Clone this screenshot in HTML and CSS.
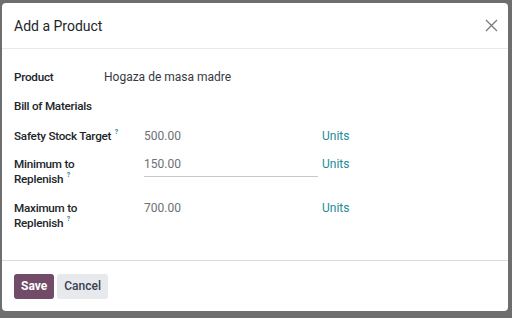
FILE: index.html
```html
<!DOCTYPE html>
<html>
<head>
    <title>Add a Product</title>
    <link rel="stylesheet" href="styles.css">
</head>
<body>
    <div class="backdrop">
        <div class="dialog">
            <div class="dialog-header">
                <h4 class="title">Add a Product</h4>
                <button class="close" aria-label="Close">
                    <svg width="13" height="13" viewBox="0 0 13 13"><path d="M1 1L12 12M12 1L1 12" stroke="#7a7a7a" stroke-width="1.3" fill="none"/></svg>
                </button>
            </div>
            <div class="dialog-body">
                <div class="row">
                    <div class="label">Product</div>
                    <div class="value product">Hogaza de masa madre</div>
                </div>
                <div class="row">
                    <div class="label nowrap">Bill of Materials</div>
                </div>
                <div class="row">
                    <div class="label wide">Safety Stock Target <sup>?</sup></div>
                    <div class="value num">500.00</div>
                    <div class="unit">Units</div>
                </div>
                <div class="row">
                    <div class="label wide">Minimum to<br>Replenish <sup>?</sup></div>
                    <div class="value num"><span class="input">150.00</span></div>
                    <div class="unit">Units</div>
                </div>
                <div class="row">
                    <div class="label wide">Maximum to<br>Replenish <sup>?</sup></div>
                    <div class="value num">700.00</div>
                    <div class="unit">Units</div>
                </div>
            </div>
            <div class="dialog-footer">
                <button class="btn btn-primary">Save</button>
                <button class="btn btn-secondary">Cancel</button>
            </div>
        </div>
    </div>
</body>
</html>
```

FILE: styles.css
```css
body {
    margin: 0;
    font-family: Roboto, "Noto Sans", sans-serif;
    font-size: 12px;
    color: #212529;
    background-color: #6e6e6e;
}

.backdrop {
    padding: 3px 4px 7px 2px;
}

.dialog {
    background-color: white;
    border-radius: 4px;
    height: 308px;
    display: flex;
    flex-direction: column;
}

.dialog-header {
    display: flex;
    align-items: center;
    justify-content: space-between;
    height: 45px;
    padding: 0 10px 0 12px;
    border-bottom: 1px solid #e7e9ed;
}

.title {
    margin: 0;
    font-size: 14px;
    font-weight: 400;
    color: #212529;
}

.close {
    background: none;
    border: none;
    padding: 0;
    width: 13px;
    height: 13px;
    cursor: pointer;
}

.dialog-body {
    flex: 1;
    padding: 21px 12px 0 12px;
}

.row {
    display: flex;
    align-items: flex-start;
    line-height: 15px;
}

.row:nth-child(1) {
    margin-bottom: 14px;
}

.row:nth-child(2) {
    margin-bottom: 15px;
}

.row:nth-child(3) {
    margin-bottom: 13px;
}

.row:nth-child(4) {
    margin-bottom: 14px;
}

.label {
    width: 90px;
    font-size: 11.7px;
    font-weight: 500;
    letter-spacing: -0.25px;
}

.label.nowrap {
    white-space: nowrap;
}

.label.wide {
    width: 130px;
}

.label sup {
    font-size: 7px;
    color: #3d8a9a;
    font-weight: 700;
    vertical-align: 6px;
    line-height: 0;
    margin-left: 1px;
}

.value {
    color: #4a4f55;
}

.product {
    color: #363a3f;
}

.num {
    width: 178px;
    color: #6b7075;
}

.input {
    display: block;
    width: 174px;
    border-bottom: 1px solid #c6c8cb;
    padding-bottom: 4px;
}

.unit {
    color: #1a8b98;
}

.dialog-footer {
    height: 50px;
    border-top: 1px solid #d8dadd;
    display: flex;
    align-items: center;
    gap: 3px;
    padding: 0 12px;
}

.btn {
    font-family: Roboto, "Noto Sans", sans-serif;
    font-size: 12px;
    border: none;
    border-radius: 3px;
    height: 25px;
    padding: 0 7px;
    cursor: pointer;
}

.btn-primary {
    background-color: #714b67;
    color: white;
    font-weight: 700;
}

.btn-secondary {
    background-color: #e7e9ed;
    color: #374151;
    font-weight: 500;
}
```
